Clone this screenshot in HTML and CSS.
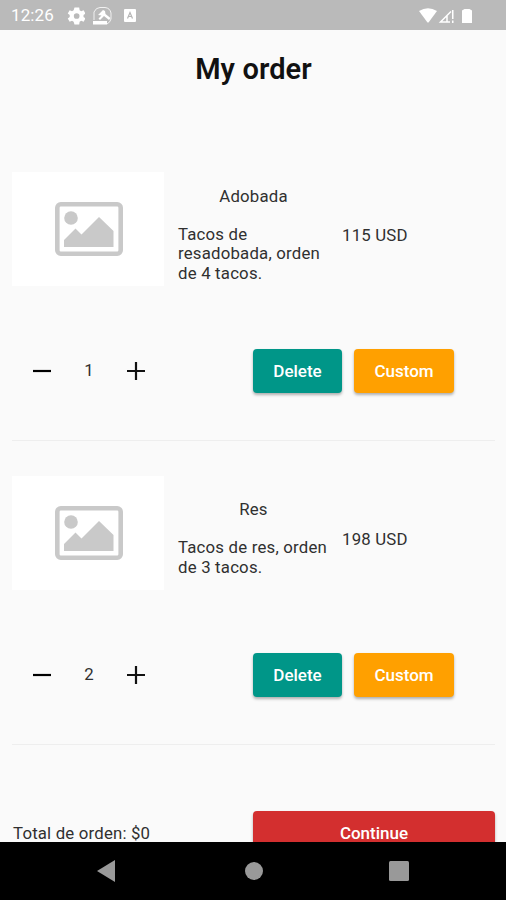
FILE: index.html
```html
<!DOCTYPE html>
<html lang="es">
<head>
<meta charset="utf-8">
<title>My order</title>
<link rel="stylesheet" href="styles.css">
</head>
<body>
<div class="screen">
  <header class="status">
    <span class="clock">12:26</span>
    <svg class="gear" width="18" height="18" viewBox="2.500 2.500 19 19"><path fill="#fff" fill-rule="evenodd" d="M19.900 13a7.500 7.500 0 0 0 0-2l2.100-1.600-2-3.500-2.500 1a7.300 7.300 0 0 0-1.700-1L15.400 3h-5l-.9 2.900a7.300 7.300 0 0 0-1.700 1l-2.500-1-2 3.500L5.400 11a7.500 7.500 0 0 0 0 2l-2.100 1.600 2 3.500 2.500-1a7.300 7.300 0 0 0 1.700 1l.9 2.900h5l.4-2.900a7.300 7.300 0 0 0 1.700-1l2.500 1 2-3.500zM12.700 15a3 3 0 1 1 0-6 3 3 0 0 1 0 6z"/></svg>
    <svg class="tool" width="21" height="20" viewBox="0 0 21 20"><path fill="none" stroke="#fff" stroke-opacity=".8" d="M2 14V6Q4 1.500 8 1.500h5q5 .5 6 5.500v6q-.5 3-4 5"/><path fill="#fff" d="M1 15h14v3.500H1zM6 9l5-5 2 1 .5 3 5 4-1.500 2-5-4-4 4-1.500-1.500 3-3z"/></svg>
    <svg class="abox" width="12" height="13" viewBox="0 0 12 13"><rect width="12" height="13" rx="1" fill="#fff"/><path d="M3.500 9.500 6 3.500l2.500 6M4.500 7.500h3" fill="none" stroke="#b5b5b5" stroke-width="1.200"/></svg>
    <svg class="signals" width="56" height="18" viewBox="0 0 56 18"><path fill="#fff" d="M0 4Q9-1.500 18 4L9.500 15.500h-1z"/><path fill="none" stroke="#fff" stroke-width="1.500" d="M32 4.500 21.500 15H31M28 9v6"/><path fill="#fff" d="M33 3h1.500v9H33zM33 13.500h1.500V16H33zM43 3.500l2.500-1.500h5L53 3.500V16H43z"/></svg>
  </header>
  <main class="content">
    <h1>My order</h1>
    <section class="item">
      <div class="info">
        <div class="thumb"><svg width="68" height="54" viewBox="0 0 68 54"><rect x="2.300" y="2.300" width="63.400" height="49.400" rx="3.500" fill="none" stroke="#c9c9c9" stroke-width="4.600"/><circle cx="16" cy="16" r="6.800" fill="#c9c9c9"/><path fill="#c9c9c9" d="M9 45v-7l11.500-11.500 6 6L44 15l14.500 14V45z"/></svg></div>
        <div class="details"><h2>Adobada</h2><p>Tacos de resadobada, orden de 4 tacos.</p></div>
        <span class="price">115 USD</span>
      </div>
      <div class="actions">
        <svg width="18" height="18" viewBox="0 0 18 18"><path d="M0 9h18" stroke="#000" stroke-width="2.200"/></svg>
        <span class="count">1</span>
        <svg width="18" height="18" viewBox="0 0 18 18"><path d="M0 9h18M9 0v18" stroke="#111" stroke-width="2.200"/></svg>
        <button class="delete">Delete</button><button class="custom">Custom</button>
      </div>
    </section>
    <section class="item">
      <div class="info">
        <div class="thumb"><svg width="68" height="54" viewBox="0 0 68 54"><rect x="2.300" y="2.300" width="63.400" height="49.400" rx="3.500" fill="none" stroke="#c9c9c9" stroke-width="4.600"/><circle cx="16" cy="16" r="6.800" fill="#c9c9c9"/><path fill="#c9c9c9" d="M9 45v-7l11.500-11.500 6 6L44 15l14.500 14V45z"/></svg></div>
        <div class="details"><h2>Res</h2><p>Tacos de res, orden de 3 tacos.</p></div>
        <span class="price">198 USD</span>
      </div>
      <div class="actions">
        <svg width="18" height="18" viewBox="0 0 18 18"><path d="M0 9h18" stroke="#000" stroke-width="2.200"/></svg>
        <span class="count">2</span>
        <svg width="18" height="18" viewBox="0 0 18 18"><path d="M0 9h18M9 0v18" stroke="#111" stroke-width="2.200"/></svg>
        <button class="delete">Delete</button><button class="custom">Custom</button>
      </div>
    </section>
    <footer class="total"><span>Total de orden: $0</span><button class="continue">Continue</button></footer>
  </main>
  <nav class="navbar">
    <svg width="18" height="22" viewBox="0 0 18 22"><path fill="#999" d="M18 0v22L0 11z"/></svg>
    <svg class="home" width="18" height="18" viewBox="0 0 18 18"><circle cx="9" cy="9" r="9" fill="#999"/></svg>
    <svg width="20" height="20" viewBox="0 0 20 20"><rect width="20" height="20" rx="1.500" fill="#999"/></svg>
  </nav>
</div>
</body>
</html>
```
FILE: styles.css
```css
* { box-sizing: border-box; margin: 0; padding: 0; }
body {
  font-family: Roboto, "Liberation Sans", sans-serif;
  font-size: 16.8px;
  line-height: 19.6px;
  letter-spacing: .2px;
  color: #303030;
  background: #fafafa;
}
svg { display: block; flex: none; }
.screen { display: flex; flex-direction: column; height: 900px; overflow: hidden; }
.status {
  flex: none;
  display: flex;
  align-items: center;
  height: 30px;
  padding: 1px 31px 0 11px;
  background: #bababa;
  color: #fff;
}
.clock { width: 56px; font-size: 17px; letter-spacing: .1px; }
.tool { margin-left: 7px; }
.abox { margin-left: 11px; }
.signals { margin-left: auto; }
.content { flex: 1; min-height: 0; overflow: hidden; padding: 0 11px 0 12px; }
h1 {
  height: 107px;
  padding-top: 22px;
  font-size: 29px;
  font-weight: 600;
  line-height: 34px;
  letter-spacing: .1px;
  text-align: center;
  color: #111;
}
.item { height: 304px; border-bottom: 1px solid #eee; }
.info { display: flex; align-items: center; height: 196px; }
.thumb {
  display: flex;
  align-items: center;
  justify-content: center;
  width: 152px;
  height: 114px;
  margin-bottom: 12px;
  padding-left: 1px;
  background: #fff;
}
.details { width: 151px; margin-left: 14px; }
h2 { margin-bottom: 18.400px; font-size: inherit; font-weight: 400; text-align: center; }
.price { margin: 2px 0 0 13px; }
.actions { display: flex; align-items: center; height: 75px; padding-left: 21px; }
.count { width: 76px; padding-top: 1px; text-align: center; }
button {
  height: 44px;
  border: 0;
  border-radius: 4px;
  font: 500 17px Roboto, "Liberation Sans", sans-serif;
  color: #fff;
  box-shadow: 0 2px 3px rgba(0, 0, 0, .3);
}
.delete { width: 89px; margin-left: 108px; background: #009688; }
.custom { width: 100px; margin-left: 12px; background: #ffa000; }
.total { display: flex; align-items: center; height: 44px; margin-top: 66px; }
.total span { width: 241px; padding: 1px 0 0 1px; letter-spacing: .18px; }
.continue { width: 242px; background: #d32f2f; }
.navbar {
  flex: none;
  display: flex;
  align-items: center;
  justify-content: space-between;
  height: 58px;
  padding: 0 97px;
  background: #000;
}
.home { margin-left: 3px; }
```
